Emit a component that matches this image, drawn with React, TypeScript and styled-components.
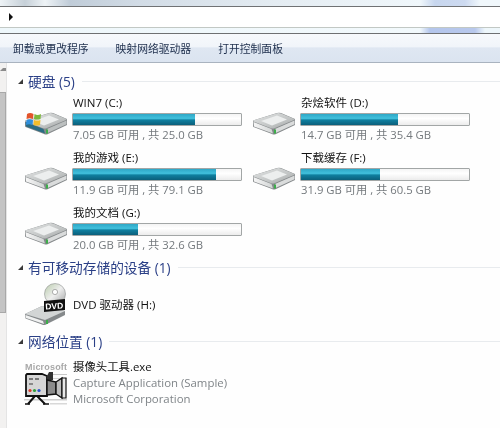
import React from "react";
import styled, { createGlobalStyle } from "styled-components";

const Global = createGlobalStyle`
  html, body { margin: 0; padding: 0; background: #fff; }
  #root { width: 500px; height: 428px; overflow: hidden; }
`;

const Window = styled.div`
  width: 500px;
  height: 428px;
  overflow: hidden;
  display: flex;
  flex-direction: column;
  background: #fefefe;
  font-family: "Open Sans", "Noto Sans CJK SC", sans-serif;
`;

const TitleStrip = styled.div`
  height: 6px;
  flex: none;
  background: linear-gradient(90deg, #eef3f6 0, #c6d0d8 5%, #eef3f6 9%, #c0ccd8 14%, #d2dce6 28%, #e4ecf2 55%, #f0f7fb 84%, #c7d6ee 87%, #cddaf0 93%, #f0f7fb 96%, #f0f7fb 100%);
  border-bottom: 1px solid #707274;
`;

const AddressBar = styled.div`
  height: 20px;
  flex: none;
  display: flex;
  align-items: center;
  padding-left: 9px;
  background: #fff;
  border-bottom: 1px solid #c2c8c4;
`;

const Caret = styled.div`
  width: 0;
  height: 0;
  border-left: 4px solid #111;
  border-top: 4px solid transparent;
  border-bottom: 4px solid transparent;
`;

const Gap = styled.div`
  height: 5px;
  flex: none;
  background: linear-gradient(90deg, #eef7fb 0, #f2f9fc 84%, #b4c6ec 86%, #b8c8ec 95%, #eef7fb 97%, #eef7fb 100%);
  border-bottom: 1px solid #6e7072;
`;

const Toolbar = styled.div`
  height: 28px;
  flex: none;
  display: flex;
  align-items: center;
  padding: 0 0 0 13px;
  gap: 27px;
  background: linear-gradient(#f7f9fc 0, #f1f5fa 45%, #dfe7f2 50%, #dbe4f0 100%);
  border-bottom: 1px solid #a9b3bf;
`;

const ToolItem = styled.span`
  font-size: 10.8px;
  color: #1d2e4c;
  filter: blur(0.35px);
`;

const Body = styled.div`
  flex: 1;
  display: flex;
  min-height: 0;
`;

const Scrollbar = styled.div`
  width: 6px;
  flex: none;
  display: flex;
  flex-direction: column;
  background: #f2f1f0;
  border-right: 1px solid #e4e4e4;
`;

const ScrollArrow = styled.div`
  height: 29px;
  flex: none;
  display: flex;
  justify-content: flex-start;
  padding-top: 5px;
  box-sizing: border-box;
  &::before {
    content: "";
    width: 0;
    height: 0;
    border-left: 3px solid transparent;
    border-right: 3px solid #8a8a8a;
    border-bottom: 3px solid #8a8a8a;
  }
`;

const Thumb = styled.div`
  height: 221px;
  flex: none;
  background: #c4c4c4;
  border: 1px solid #a8a8a8;
  border-left: none;
  box-sizing: border-box;
`;

const Content = styled.div`
  flex: 1;
  min-width: 0;
  padding: 8px 0 0 11px;
  filter: blur(0.35px);
`;

const SectionHeader = styled.div<{ $top?: number }>`
  display: flex;
  align-items: center;
  height: 20px;
  margin-top: ${(p) => p.$top ?? 0}px;
  color: #2a3f86;
  font-size: 13.7px;
  &::after {
    content: "";
    flex: 1;
    height: 1px;
    margin-left: 7px;
    background: #e8ebee;
  }
`;

const Arrow = styled.span`
  width: 0;
  height: 0;
  margin-right: 5px;
  border-bottom: 5px solid #3a3a3a;
  border-left: 5px solid transparent;
`;

const DriveGrid = styled.div`
  display: grid;
  grid-template-columns: 228px 228px;
  grid-auto-rows: 55px;
  margin-top: 4px;
`;

const Drive = styled.div`
  display: flex;
  align-items: flex-start;
  padding-left: 4px;
`;

const IconBox = styled.div`
  width: 50px;
  flex: none;
  padding-top: 16px;
  box-sizing: border-box;
  svg { display: block; overflow: visible; }
`;

const Info = styled.div`
  flex: 1;
  min-width: 0;
`;

const Name = styled.div`
  font-size: 11.5px;
  line-height: 16px;
  height: 16px;
  color: #111;
  padding-left: 1px;
`;

const Meter = styled.div`
  width: 170px;
  height: 13px;
  margin-top: 2px;
  box-sizing: border-box;
  border: 1px solid #a2a6a6;
  border-radius: 1px;
  background: linear-gradient(#f4f4f4, #ffffff 40%, #ececec);
  overflow: hidden;
`;

const MeterFill = styled.div`
  height: 100%;
  background: linear-gradient(#2ea7c6 0, #41c0dc 40%, #0f7f9f 55%, #0b5f7b 100%);
`;

const Sub = styled.div`
  font-size: 11.3px;
  line-height: 16px;
  margin-top: 1px;
  padding-left: 1px;
  color: #74797d;
`;

const SimpleRow = styled.div`
  display: flex;
  align-items: center;
  height: 44px;
  padding-left: 4px;
  margin-top: 6px;
`;

const AppRow = styled.div`
  display: flex;
  align-items: flex-start;
  padding-left: 4px;
  margin-top: 8px;
`;

const AppIcon = styled.div`
  width: 50px;
  flex: none;
  svg { display: block; }
`;

const AppText = styled.div`
  font-size: 11.4px;
  line-height: 16px;
  color: #7f8488;
  padding-left: 1px;
`;

const AppName = styled.div`
  color: #111;
`;

function Hdd({ tint }: { tint?: boolean }) {
  return (
    <svg width="48" height="25" viewBox="0 0 48 25">
      <defs>
        <linearGradient id="hddTop" x1="0" y1="0" x2="1" y2="1">
          <stop offset="0" stopColor="#e2e4e4" />
          <stop offset="0.6" stopColor="#c2c5c5" />
          <stop offset="1" stopColor="#a0a3a3" />
        </linearGradient>
        <linearGradient id="hddFront" x1="0" y1="0" x2="1" y2="0">
          <stop offset="0" stopColor="#f6f6f6" />
          <stop offset="1" stopColor="#d2d5d5" />
        </linearGradient>
      </defs>
      <path d="M3 9.5 L27 2 Q29 1.5 31 2 L45 8 L45 14 L26 23 Q24 24 22 23 L3.5 16 Q3 15.5 3 15 Z" fill="#85898b" />
      <path d="M3 9.5 L27 2.2 Q29 1.8 31 2.5 L44.5 8 Q45 8.5 44 9 L25 17 Q23 18 21 17.2 L3.5 10.5 Q2.5 10 3 9.5 Z" fill="url(#hddTop)" />
      <path d="M11 10 L27 4.5 L37 8.5 L22 14.5 Z" fill="#eceeee" />
      <path d="M3.5 11 L21.5 18 L23 22.5 L4 15.5 Z" fill={tint ? "#2a6c84" : "url(#hddFront)"} />
      <path d="M25 18 L44.5 9.5 L44.5 13.2 L26 21.8 Z" fill={tint ? "#bcc0c0" : "#dadcdc"} />
      <rect x="24" y="18.5" width="2" height="4" fill="#3cae4a" />
      {tint && (
        <g>
          <path d="M5 3 Q8 1 11.5 3 L11 8 Q8 6.5 4.5 8 Z" fill="#e3542b" />
          <path d="M12.5 3 Q15.5 5 19 3 L18.5 8 Q15 9 12 8 Z" fill="#7cb83c" />
          <path d="M4.5 9 Q8 7.5 11 9 L10.5 14 Q7 12.5 4 14 Z" fill="#2f8fdc" />
          <path d="M12 9 Q15 10 18.5 9 L18 14 Q14.5 15 11.5 14 Z" fill="#f2bd2b" />
        </g>
      )}
    </svg>
  );
}

function DvdIcon() {
  return (
    <svg width="48" height="44" viewBox="0 0 48 44">
      <defs>
        <linearGradient id="disc" x1="0" y1="0" x2="1" y2="1">
          <stop offset="0" stopColor="#b9ccab" />
          <stop offset="0.5" stopColor="#eeeeee" />
          <stop offset="1" stopColor="#a2a4a4" />
        </linearGradient>
      </defs>
      <path d="M3 31 L20 23 L43 28 L43 32 L24 41.5 Q22 42.5 20 41.5 L3.5 35.5 Z" fill="#85898b" />
      <path d="M3 31 L20 23 L43 28 L23 37 Z" fill="#d2d5d5" />
      <path d="M3.5 32 L21 38 L22 41 L4 35 Z" fill="#f0f1f1" />
      <rect x="24" y="37" width="2" height="4" fill="#3cae4a" />
      <circle cx="33" cy="11" r="10.5" fill="url(#disc)" stroke="#8d9090" strokeWidth="0.6" />
      <circle cx="33" cy="9" r="2.6" fill="#fff" stroke="#9a9a9a" strokeWidth="0.8" />
      <path d="M22 18 L43 16 L43 27 L22 29 Z" fill="#111" />
      <text x="23.5" y="26.5" fontFamily="Liberation Sans" fontWeight="700" fontSize="8.5" fill="#fff" textLength="18" transform="rotate(-3 23 27)">DVD</text>
    </svg>
  );
}

function CameraIcon() {
  return (
    <svg width="48" height="50" viewBox="0 0 48 50">
      <text x="3" y="11" fontFamily="Liberation Sans" fontWeight="700" fontSize="9" fill="#a8a8a8" textLength="42">Microsoft</text>
      <g transform="translate(2 3)">
        <rect x="24" y="12" width="19" height="1" fill="#c8c8c8" />
        <rect x="24" y="16" width="19" height="1" fill="#d4d4d4" />
        <rect x="0" y="37" width="43" height="1.5" fill="#cdcdcd" />
        <rect x="26" y="41" width="17" height="1.5" fill="#d8d8d8" />
        <path d="M3 12 H18 L23 14 V34 H2 V13 Z" fill="#d6d6d6" stroke="#111" strokeWidth="1.8" />
        <path d="M23 14 L25 10 H29 V18 L23 20 Z" fill="#333" />
        <path d="M23 18 L32 20 V32 L23 33 Z" fill="#8b8b8b" stroke="#111" strokeWidth="1.4" />
        <path d="M32 20 L38 16 V36 L32 32 Z" fill="#bdbdbd" stroke="#111" strokeWidth="1.4" />
        <path d="M38 16 L42 16 V36 L38 36 Z" fill="#e8e8e8" stroke="#111" strokeWidth="1.2" />
        <rect x="5" y="16" width="4" height="2" fill="#777" />
        <rect x="11" y="16" width="4" height="2" fill="#777" />
        <rect x="5" y="21" width="4" height="2" fill="#888" />
        <circle cx="6" cy="28.5" r="1.6" fill="#d93a2b" />
        <circle cx="10.5" cy="28.5" r="1.6" fill="#2f9f3a" />
        <circle cx="15" cy="28.5" r="1.6" fill="#2d55c8" />
        <path d="M11 34 L4 42 M13 34 L21 42" stroke="#111" strokeWidth="2" />
        <path d="M1 42 H6 M19 42 H25" stroke="#111" strokeWidth="1.6" />
      </g>
    </svg>
  );
}

const drives = [
  { name: "WIN7 (C:)", sub: "7.05 GB 可用 , 共 25.0 GB", pct: 72.5, tint: true },
  { name: "杂烩软件 (D:)", sub: "14.7 GB 可用 , 共 35.4 GB", pct: 58 },
  { name: "我的游戏 (E:)", sub: "11.9 GB 可用 , 共 79.1 GB", pct: 85 },
  { name: "下载缓存 (F:)", sub: "31.9 GB 可用 , 共 60.5 GB", pct: 47 },
  { name: "我的文档 (G:)", sub: "20.0 GB 可用 , 共 32.6 GB", pct: 38.5 },
];

export default function App() {
  return (
    <Window>
      <Global />
      <TitleStrip />
      <AddressBar>
        <Caret />
      </AddressBar>
      <Gap />
      <Toolbar>
        <ToolItem>卸载或更改程序</ToolItem>
        <ToolItem>映射网络驱动器</ToolItem>
        <ToolItem>打开控制面板</ToolItem>
      </Toolbar>
      <Body>
        <Scrollbar>
          <ScrollArrow />
          <Thumb />
        </Scrollbar>
        <Content>
          <SectionHeader>
            <Arrow />
            硬盘 (5)
          </SectionHeader>
          <DriveGrid>
            {drives.map((d) => (
              <Drive key={d.name}>
                <IconBox>
                  <Hdd tint={d.tint} />
                </IconBox>
                <Info>
                  <Name>{d.name}</Name>
                  <Meter>
                    <MeterFill style={{ width: `${d.pct}%` }} />
                  </Meter>
                  <Sub>{d.sub}</Sub>
                </Info>
              </Drive>
            ))}
          </DriveGrid>
          <SectionHeader $top={-3}>
            <Arrow />
            有可移动存储的设备 (1)
          </SectionHeader>
          <SimpleRow>
            <AppIcon>
              <DvdIcon />
            </AppIcon>
            <Name>DVD 驱动器 (H:)</Name>
          </SimpleRow>
          <SectionHeader $top={4}>
            <Arrow />
            网络位置 (1)
          </SectionHeader>
          <AppRow>
            <AppIcon>
              <CameraIcon />
            </AppIcon>
            <AppText>
              <AppName>摄像头工具.exe</AppName>
              <div>Capture Application (Sample)</div>
              <div>Microsoft Corporation</div>
            </AppText>
          </AppRow>
        </Content>
      </Body>
    </Window>
  );
}
